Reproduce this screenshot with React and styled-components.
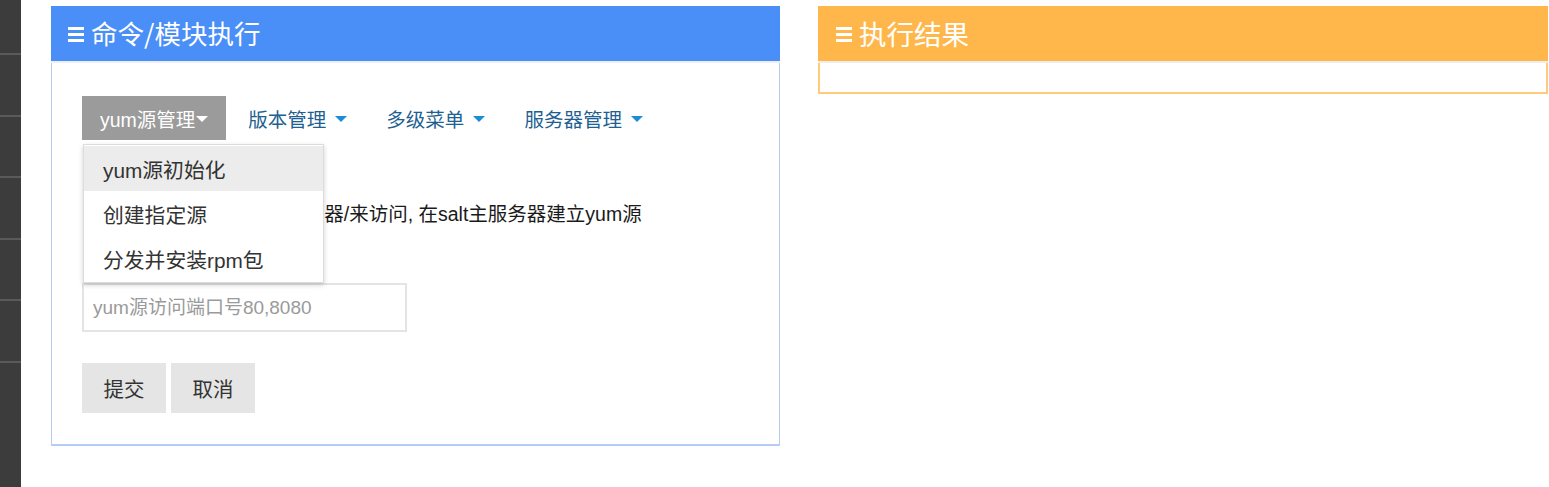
import React from "react";
import styled, { createGlobalStyle } from "styled-components";

const Global = createGlobalStyle`
  html, body { margin: 0; padding: 0; background: #fff; }
  body { font-family: "Liberation Sans", "Noto Sans CJK SC", sans-serif; }
  * { box-sizing: border-box; }
`;

const Page = styled.div`
  display: flex;
  min-height: 487px;
`;

const Sidebar = styled.div`
  width: 21px;
  flex: none;
  background: #3c3c3c;
  display: flex;
  flex-direction: column;
  padding-top: 53px;
`;

const SideItem = styled.div`
  height: 61.6px;
  border-top: 2px solid #5a5a5a;
`;

const Main = styled.div`
  flex: 1;
  display: grid;
  grid-template-columns: 729px 730px;
  column-gap: 38px;
  align-items: start;
  padding: 6px 0 0 30px;
`;

const Panel = styled.section`
  border: ${(p) => p.$bw}px solid ${(p) => p.$border};
  border-bottom-width: 2px;
  border-top: none;
  background: #fff;
`;

const PanelHeader = styled.header`
  height: 57px;
  margin: 0 -${(p) => p.$bw}px;
  padding-left: ${(p) => 16 + p.$bw}px;
  background: ${(p) => p.$bg};
  border-bottom: 2px solid #eeeeee;
  display: flex;
  align-items: center;
  gap: 7px;
  color: #fff;
  font-size: ${(p) => p.$size}px;
  font-family: "Noto Sans CJK SC", "Liberation Sans", sans-serif;
  padding-bottom: 2px;
`;

const MenuIcon = () => (
  <svg width="16" height="15" viewBox="0 0 16 15" style={{ marginTop: 3 }}>
    <rect x="0" y="0" width="16" height="3" fill="#fff" />
    <rect x="0" y="6" width="16" height="3" fill="#fff" />
    <rect x="0" y="12" width="16" height="3" fill="#fff" />
  </svg>
);

const PanelBody = styled.div`
  padding: ${(p) => (p.$empty ? "0" : "33px 29px 31px 30px")};
  height: ${(p) => (p.$empty ? "29px" : "auto")};
`;

const Nav = styled.nav`
  display: flex;
  align-items: stretch;
  height: 44px;
  position: relative;
  font-size: 19.5px;
`;

const NavItem = styled.div`
  position: relative;
  display: flex;
  align-items: center;
  gap: ${(p) => (p.$active ? "1px" : "9px")};
  padding: ${(p) => (p.$active ? "0 18px 0 18px" : "0 17px 0 22px")};
  background: ${(p) => (p.$active ? "#9b9b9b" : "transparent")};
  color: ${(p) => (p.$active ? "#fff" : "#1e6090")};
  white-space: nowrap;
`;

const Caret = styled.span`
  width: 0;
  height: 0;
  border-left: 6px solid transparent;
  border-right: 6px solid transparent;
  border-top: 6px solid ${(p) => p.$color};
  margin-top: 2px;
`;

const Dropdown = styled.ul`
  position: absolute;
  top: 48px;
  left: 1px;
  width: 241px;
  margin: 0;
  padding: 1px 0 1px;
  list-style: none;
  background: #fff;
  border: 1px solid #dcdcdc;
  box-shadow: 0 2px 5px rgba(0, 0, 0, 0.18);
  z-index: 5;
`;

const DropItem = styled.li`
  height: 45px;
  display: flex;
  align-items: center;
  padding-left: 19px;
  font-size: 20.8px;
  color: #333;
  background: ${(p) => (p.$hover ? "#ececec" : "#fff")};
`;

const Note = styled.p`
  margin: 52px 0 0;
  padding-left: 5px;
  font-size: 19.5px;
  color: #1a1a1a;
  white-space: nowrap;
  line-height: 44px;
`;

const Field = styled.input`
  display: block;
  margin-top: 47px;
  width: 325px;
  height: 49px;
  border: 2px solid #e4e4e4;
  padding: 0 9px;
  font-size: 19px;
  font-family: "Liberation Sans", "Noto Sans CJK SC", sans-serif;
  color: #333;
  outline: none;
  &::placeholder { color: #9a9a9a; }
`;

const Actions = styled.div`
  display: flex;
  gap: 5px;
  margin-top: 31px;
`;

const Button = styled.button`
  width: 84px;
  height: 50px;
  border: none;
  background: #e5e5e5;
  color: #333;
  font-size: 20.5px;
  font-family: "Noto Sans CJK SC", sans-serif;
  padding: 0;
`;

export default function App() {
  return (
    <>
      <Global />
      <Page>
        <Sidebar>
          {Array.from({ length: 6 }).map((_, i) => (
            <SideItem key={i} />
          ))}
        </Sidebar>
        <Main>
          <Panel $border="#b5cdf5" $bw={1}>
            <PanelHeader $bg="#4a8ef7" $bw={1} $size={26.5}>
              <MenuIcon />
              命令/模块执行
            </PanelHeader>
            <PanelBody>
              <Nav>
                <NavItem $active>
                  yum源管理<Caret $color="#fff" />
                  <Dropdown>
                    <DropItem $hover>yum源初始化</DropItem>
                    <DropItem>创建指定源</DropItem>
                    <DropItem>分发并安装rpm包</DropItem>
                  </Dropdown>
                </NavItem>
                <NavItem>
                  版本管理<Caret $color="#1a8dd3" />
                </NavItem>
                <NavItem>
                  多级菜单<Caret $color="#1a8dd3" />
                </NavItem>
                <NavItem>
                  服务器管理<Caret $color="#1a8dd3" />
                </NavItem>
              </Nav>
              <Note>说明:供客户端通过yum服务器/来访问, 在salt主服务器建立yum源</Note>
              <Field placeholder="yum源访问端口号80,8080" />
              <Actions>
                <Button>提交</Button>
                <Button>取消</Button>
              </Actions>
            </PanelBody>
          </Panel>
          <Panel $border="#ffcb7a" $bw={2}>
            <PanelHeader $bg="#ffb74b" $bw={2} $size={27.5}>
              <MenuIcon />
              执行结果
            </PanelHeader>
            <PanelBody $empty />
          </Panel>
        </Main>
      </Page>
    </>
  );
}
